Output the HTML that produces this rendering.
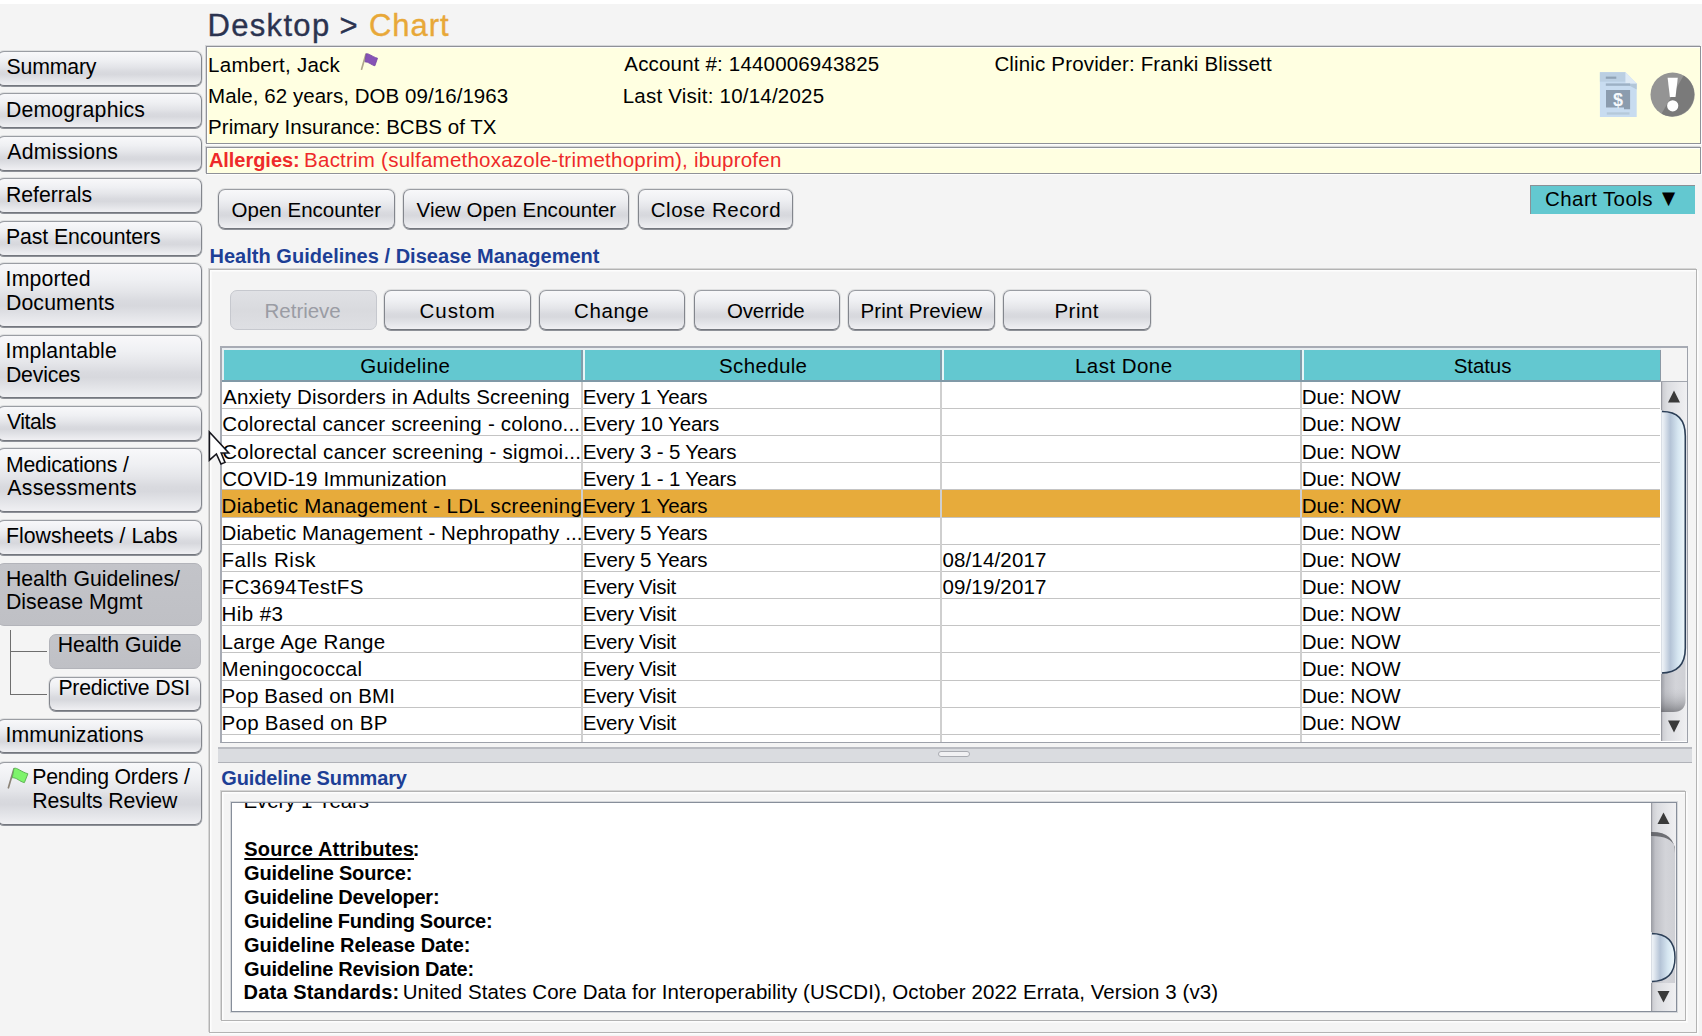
<!DOCTYPE html>
<html lang="en">
<head>
<meta charset="utf-8">
<title>Desktop &gt; Chart</title>
<style>
html,body{margin:0;padding:0;}
body{width:1702px;height:1036px;overflow:hidden;background:#f4f4f4;position:relative;
  font-family:"Liberation Sans",sans-serif;font-size:20px;color:#000;}
.t{position:absolute;white-space:pre;line-height:24px;height:24px;}
.abs{position:absolute;}
#topstrip{position:absolute;left:0;top:0;width:1702px;height:4px;background:#fff;}
.nb{position:absolute;box-sizing:border-box;border:1px solid #83868d;border-top-color:#9a9da3;border-bottom-color:#74777e;border-radius:7px;
  background:linear-gradient(#f8f8fa 0%,#eff0f3 25%,#e4e5e9 45%,#d9dadf 60%,#d7d8dd 68%,#e3e4e8 84%,#f0f0f3 100%);
  box-shadow:0 1px 0 #8d9097,0 0 0 1px rgba(120,124,132,0.16);}
.nb.sel{background:linear-gradient(#c3c4c9,#bfc0c5);border-color:#b3b4ba;box-shadow:none;}
.nb.dis{border-color:#c6c8ce;background:linear-gradient(#e0e1e5,#d9dade 50%,#dedfe3);box-shadow:none;}
.ybox{position:absolute;box-sizing:border-box;background:#ffffe1;border:1px solid #8f9198;box-shadow:1px 1px 0 #fdfdfd,inset 1px 1px 0 rgba(255,255,255,0.85),-1px -1px 0 rgba(143,145,152,0.3);}
.ln{position:absolute;background:#c4c4c4;}
</style>
</head>
<body>
<div id="topstrip"></div>
<div class="nb " style="left:-3px;top:51px;width:205px;height:35px"></div>
<span class="t" style="left:6.60px;top:55px;letter-spacing:-0.183px;font-size:21.25px;">Summary</span>
<div class="nb " style="left:-3px;top:93px;width:205px;height:35px"></div>
<span class="t" style="left:5.90px;top:98px;letter-spacing:0.191px;font-size:21.25px;">Demographics</span>
<div class="nb " style="left:-3px;top:136px;width:205px;height:35px"></div>
<span class="t" style="left:7.30px;top:140px;letter-spacing:0.222px;font-size:21.25px;">Admissions</span>
<div class="nb " style="left:-3px;top:178px;width:205px;height:35px"></div>
<span class="t" style="left:5.90px;top:183px;letter-spacing:0.000px;font-size:21.25px;">Referrals</span>
<div class="nb " style="left:-3px;top:221px;width:205px;height:35px"></div>
<span class="t" style="left:5.90px;top:225px;letter-spacing:-0.086px;font-size:21.25px;">Past Encounters</span>
<div class="nb " style="left:-3px;top:263px;width:205px;height:64px"></div>
<span class="t" style="left:5.60px;top:267px;letter-spacing:0.143px;font-size:21.25px;">Imported</span>
<span class="t" style="left:5.90px;top:291px;letter-spacing:0.150px;font-size:21.25px;">Documents</span>
<div class="nb " style="left:-3px;top:335px;width:205px;height:63px"></div>
<span class="t" style="left:5.60px;top:339px;letter-spacing:0.130px;font-size:21.25px;">Implantable</span>
<span class="t" style="left:5.90px;top:363px;letter-spacing:-0.167px;font-size:21.25px;">Devices</span>
<div class="nb " style="left:-3px;top:406px;width:205px;height:35px"></div>
<span class="t" style="left:6.90px;top:410px;letter-spacing:-0.420px;font-size:21.25px;">Vitals</span>
<div class="nb " style="left:-3px;top:448px;width:205px;height:64px"></div>
<span class="t" style="left:5.90px;top:453px;letter-spacing:-0.192px;font-size:21.25px;">Medications /</span>
<span class="t" style="left:7.30px;top:476px;letter-spacing:0.290px;font-size:21.25px;">Assessments</span>
<div class="nb " style="left:-3px;top:520px;width:205px;height:35px"></div>
<span class="t" style="left:5.90px;top:524px;letter-spacing:0.031px;font-size:21.25px;">Flowsheets / Labs</span>
<div class="nb sel" style="left:-3px;top:563px;width:205px;height:63px"></div>
<span class="t" style="left:5.90px;top:567px;letter-spacing:0.024px;font-size:21.25px;">Health Guidelines/</span>
<span class="t" style="left:5.90px;top:590px;letter-spacing:0.064px;font-size:21.25px;">Disease Mgmt</span>
<div class="nb " style="left:-3px;top:719px;width:205px;height:34px"></div>
<span class="t" style="left:5.60px;top:723px;letter-spacing:0.083px;font-size:21.25px;">Immunizations</span>
<div class="nb " style="left:-3px;top:762px;width:205px;height:63px"></div>
<span class="t" style="left:32.30px;top:765px;letter-spacing:-0.207px;font-size:21.25px;">Pending Orders /</span>
<span class="t" style="left:32.30px;top:789px;letter-spacing:-0.100px;font-size:21.25px;">Results Review</span>
<div class="nb sel" style="left:49px;top:634px;width:152px;height:35px"></div>
<span class="t" style="left:57.80px;top:633px;letter-spacing:-0.018px;font-size:21.25px;">Health Guide</span>
<div class="nb" style="left:49px;top:677px;width:152px;height:34px"></div>
<span class="t" style="left:58.40px;top:676px;letter-spacing:-0.223px;font-size:21.25px;">Predictive DSI</span>
<div class="abs" style="left:10px;top:630px;width:1px;height:65px;background:#6e6e6e"></div>
<div class="abs" style="left:10px;top:651px;width:37px;height:1px;background:#6e6e6e"></div>
<div class="abs" style="left:10px;top:694px;width:37px;height:1px;background:#6e6e6e"></div>
<svg class="abs" style="left:6px;top:766px" width="26" height="26" viewBox="0 0 26 26">
<path d="M2.4 21.8 L8 2.8" stroke="#8c8478" stroke-width="1.7" fill="none" stroke-linecap="round"/>
<path d="M8 2.4 C11 1.2 14.5 5.6 21.9 7.8 L18.4 16.6 C13.5 15.6 10.5 11.2 6.3 11.8 Z" fill="#7ef46b" stroke="#5fb455" stroke-width="1"/>
</svg>
<span class="t" style="left:207.60px;top:14px;letter-spacing:1.300px;font-size:31px;color:#2b3350;-webkit-text-stroke:0.35px #2b3350;">Desktop</span>
<span class="t" style="left:339.50px;top:14px;letter-spacing:1.200px;font-size:31px;color:#2b3350;-webkit-text-stroke:0.35px #2b3350;">&gt;</span>
<span class="t" style="left:368.90px;top:14px;letter-spacing:1.000px;font-size:31px;color:#e8a838;-webkit-text-stroke:0.35px #e8a838;">Chart</span>
<div class="ybox" style="left:206px;top:46px;width:1495px;height:98px"></div>
<span class="t" style="left:208.10px;top:53px;letter-spacing:0.250px;font-size:20.5px;">Lambert, Jack</span>
<span class="t" style="left:208.10px;top:84px;letter-spacing:0.052px;font-size:20.5px;">Male, 62 years, DOB 09/16/1963</span>
<span class="t" style="left:208.10px;top:115px;letter-spacing:0.018px;font-size:20.5px;">Primary Insurance: BCBS of TX</span>
<span class="t" style="left:624.30px;top:52px;letter-spacing:0.178px;font-size:20.5px;">Account #: 1440006943825</span>
<span class="t" style="left:622.70px;top:84px;letter-spacing:0.219px;font-size:20.5px;">Last Visit: 10/14/2025</span>
<span class="t" style="left:994.40px;top:52px;letter-spacing:0.161px;font-size:20.5px;">Clinic Provider: Franki Blissett</span>
<svg class="abs" style="left:358px;top:51px" width="24" height="24" viewBox="0 0 24 24">
<path d="M3.6 18.2 L7.9 3.2" stroke="#b0a88c" stroke-width="1.7" fill="none" stroke-linecap="round"/>
<path d="M8.2 2.8 C10.5 2 14 5.6 19.5 7.2 L16.9 14.8 C13.5 14.2 10.8 10.8 7 10.8 Z" fill="#8653b6" stroke="#7242a2" stroke-width="0.8"/>
</svg>
<svg class="abs" style="left:1599px;top:71px" width="40" height="48" viewBox="0 0 40 48">
<path d="M0.9 1.2 H26.5 L37.7 12.5 V45.9 H0.9 Z" fill="#c8dcf0"/>
<path d="M0.9 1.2 H26.5 V10.7 H0.9 Z" fill="#bbcfe2"/>
<path d="M26.5 12.5 H37.7 V18.5 Z" fill="#b2c6d8"/>
<path d="M26.5 1.2 L37.7 12.5 H26.5 Z" fill="#deeaf5"/>
<rect x="6.8" y="5.6" width="10.5" height="2.2" fill="#8fa2b5"/>
<rect x="6.8" y="12.4" width="24.3" height="2.4" fill="#9db1c5"/>
<path d="M7 19 H31.1 V38.2 H25 V36.4 H7 Z" fill="#8b9cae"/>
<rect x="7.8" y="41.3" width="22.7" height="2.3" fill="#b5c9da"/>
<text x="19" y="34.8" font-family="Liberation Sans, sans-serif" font-weight="700" font-size="18" text-anchor="middle" fill="#f4f8fc">$</text>
</svg>
<svg class="abs" style="left:1650px;top:72px" width="46" height="46" viewBox="0 0 46 46">
<circle cx="22.6" cy="22.6" r="22.1" fill="#949494"/>
<path d="M33.7 3.5 A22.1 22.1 0 0 1 11.5 41.7 Z" fill="#7a7a7a"/>
<path d="M17.6 5.8 H27.8 L25.5 25 H19.9 Z" fill="#fff"/>
<circle cx="22.7" cy="33.8" r="5.6" fill="#fff"/>
</svg>
<div class="ybox" style="left:206px;top:147px;width:1495px;height:27px"></div>
<span class="t" style="left:208.90px;top:148px;letter-spacing:-0.033px;font-weight:700;color:#ee2a2a;">Allergies:</span>
<span class="t" style="left:304.10px;top:148px;letter-spacing:0.229px;font-size:20.5px;color:#ee2a2a;">Bactrim (sulfamethoxazole-trimethoprim), ibuprofen</span>
<div class="nb" style="left:218px;top:189px;width:177px;height:40px"></div>
<span class="t" style="left:231.50px;top:198px;letter-spacing:0.023px;font-size:20.5px;">Open Encounter</span>
<div class="nb" style="left:403px;top:189px;width:226px;height:40px"></div>
<span class="t" style="left:416.60px;top:198px;letter-spacing:0.028px;font-size:20.5px;">View Open Encounter</span>
<div class="nb" style="left:638px;top:189px;width:155px;height:40px"></div>
<span class="t" style="left:650.80px;top:198px;letter-spacing:0.509px;font-size:20.5px;">Close Record</span>
<div class="abs" style="left:1530px;top:185px;width:165px;height:29px;box-sizing:border-box;background:#63c8d0;border-left:1px solid #8a9096;border-top:1px solid #8a9096"></div>
<span class="t" style="left:1545.10px;top:187px;letter-spacing:0.400px;font-size:20.5px;">Chart Tools</span>
<span class="t" style="left:1662px;top:186px;font-size:18px;font-family:'DejaVu Sans',sans-serif;transform:scaleX(0.95);transform-origin:left">&#9660;</span>
<span class="t" style="left:209.50px;top:244px;letter-spacing:0.027px;font-weight:700;color:#1d3f96;">Health Guidelines / Disease Management</span>
<div class="abs" style="left:209px;top:269px;width:1488px;height:764px;box-sizing:border-box;border:1px solid #b3b3b3;box-shadow:inset 1px 1px 0 #fdfdfd,inset 2px 2px 0 rgba(255,255,255,0.45),1px 1px 0 #fdfdfd,2px 2px 0 rgba(255,255,255,0.45),0 0 0 1px rgba(170,170,170,0.0),-1px -1px 0 rgba(176,176,176,0.45)"></div>
<div class="nb dis" style="left:230px;top:290px;width:147px;height:40px"></div>
<span class="t" style="left:264.60px;top:299px;letter-spacing:-0.029px;font-size:20.5px;color:#9a9ca4;">Retrieve</span>
<div class="nb" style="left:384px;top:290px;width:147px;height:40px"></div>
<span class="t" style="left:419.50px;top:299px;letter-spacing:0.960px;font-size:20.5px;">Custom</span>
<div class="nb" style="left:539px;top:290px;width:146px;height:40px"></div>
<span class="t" style="left:574.10px;top:299px;letter-spacing:0.560px;font-size:20.5px;">Change</span>
<div class="nb" style="left:694px;top:290px;width:146px;height:40px"></div>
<span class="t" style="left:726.90px;top:299px;letter-spacing:-0.114px;font-size:20.5px;">Override</span>
<div class="nb" style="left:848px;top:290px;width:147px;height:40px"></div>
<span class="t" style="left:860.60px;top:299px;letter-spacing:0.050px;font-size:20.5px;">Print Preview</span>
<div class="nb" style="left:1003px;top:290px;width:148px;height:40px"></div>
<span class="t" style="left:1054.50px;top:299px;letter-spacing:0.450px;font-size:20.5px;">Print</span>
<div class="abs" style="left:220px;top:346px;width:1468px;height:397px;box-sizing:border-box;border:2px solid #a7abb4;border-right-width:1px;border-bottom-width:1px;border-right-color:#9da1aa;border-bottom-color:#9da1aa;background:#fff"></div>
<div class="abs" style="left:222px;top:348px;width:1465px;height:2px;background:#e9eef1"></div>
<div class="abs" style="left:222px;top:350px;width:2px;height:30px;background:#e4eef1"></div>
<div class="abs" style="left:224px;top:350px;width:1436px;height:30px;background:#63c8d0"></div>
<div class="abs" style="left:1661px;top:348px;width:26px;height:34px;background:#f4f4f4"></div>
<div class="abs" style="left:1660px;top:350px;width:1px;height:32px;background:#8a98a4"></div>
<div class="abs" style="left:222px;top:380px;width:1438px;height:2px;background:#8099a7"></div>
<div class="abs" style="left:1660px;top:381px;width:27px;height:1px;background:#a2a6ae"></div>
<div class="abs" style="left:581px;top:350px;width:2px;height:30px;background:#7f9dab"></div>
<div class="abs" style="left:583px;top:350px;width:2px;height:30px;background:#e6f5f7"></div>
<div class="abs" style="left:940px;top:350px;width:2px;height:30px;background:#7f9dab"></div>
<div class="abs" style="left:942px;top:350px;width:2px;height:30px;background:#e6f5f7"></div>
<div class="abs" style="left:1300px;top:350px;width:2px;height:30px;background:#7f9dab"></div>
<div class="abs" style="left:1302px;top:350px;width:2px;height:30px;background:#e6f5f7"></div>
<span class="t" style="left:360.30px;top:354px;letter-spacing:0.363px;font-size:20.5px;">Guideline</span>
<span class="t" style="left:719.00px;top:354px;letter-spacing:0.357px;font-size:20.5px;">Schedule</span>
<span class="t" style="left:1075.00px;top:354px;letter-spacing:0.450px;font-size:20.5px;">Last Done</span>
<span class="t" style="left:1453.70px;top:354px;letter-spacing:-0.080px;font-size:20.5px;">Status</span>
<div class="abs" style="left:222px;top:490px;width:1438px;height:27px;background:#e7ab3b"></div>
<div class="ln" style="left:222px;top:408px;width:1438px;height:1px"></div>
<div class="ln" style="left:222px;top:435px;width:1438px;height:1px"></div>
<div class="ln" style="left:222px;top:462px;width:1438px;height:1px"></div>
<div class="ln" style="left:222px;top:489px;width:1438px;height:1px"></div>
<div class="ln" style="left:222px;top:517px;width:1438px;height:1px"></div>
<div class="ln" style="left:222px;top:544px;width:1438px;height:1px"></div>
<div class="ln" style="left:222px;top:571px;width:1438px;height:1px"></div>
<div class="ln" style="left:222px;top:598px;width:1438px;height:1px"></div>
<div class="ln" style="left:222px;top:625px;width:1438px;height:1px"></div>
<div class="ln" style="left:222px;top:652px;width:1438px;height:1px"></div>
<div class="ln" style="left:222px;top:680px;width:1438px;height:1px"></div>
<div class="ln" style="left:222px;top:707px;width:1438px;height:1px"></div>
<div class="ln" style="left:222px;top:734px;width:1438px;height:1px"></div>
<div class="abs" style="left:581px;top:382px;width:2px;height:360px;background:#cfcfcf"></div>
<div class="abs" style="left:940px;top:382px;width:2px;height:360px;background:#cfcfcf"></div>
<div class="abs" style="left:1300px;top:382px;width:2px;height:360px;background:#cfcfcf"></div>
<span class="t" style="left:223.10px;top:385px;letter-spacing:0.131px;font-size:20.5px;">Anxiety Disorders in Adults Screening</span>
<span class="t" style="left:582.80px;top:385px;letter-spacing:-0.142px;font-size:20.5px;">Every 1 Years</span>
<span class="t" style="left:1301.70px;top:385px;letter-spacing:-0.043px;font-size:20.5px;">Due: NOW</span>
<span class="t" style="left:222.20px;top:412px;letter-spacing:0.211px;font-size:20.5px;">Colorectal cancer screening - colono...</span>
<span class="t" style="left:582.80px;top:412px;letter-spacing:-0.115px;font-size:20.5px;">Every 10 Years</span>
<span class="t" style="left:1301.70px;top:412px;letter-spacing:-0.043px;font-size:20.5px;">Due: NOW</span>
<span class="t" style="left:222.20px;top:440px;letter-spacing:0.268px;font-size:20.5px;">Colorectal cancer screening - sigmoi...</span>
<span class="t" style="left:582.80px;top:440px;letter-spacing:-0.156px;font-size:20.5px;">Every 3 - 5 Years</span>
<span class="t" style="left:1301.70px;top:440px;letter-spacing:-0.043px;font-size:20.5px;">Due: NOW</span>
<span class="t" style="left:222.20px;top:467px;letter-spacing:0.110px;font-size:20.5px;">COVID-19 Immunization</span>
<span class="t" style="left:582.80px;top:467px;letter-spacing:-0.156px;font-size:20.5px;">Every 1 - 1 Years</span>
<span class="t" style="left:1301.70px;top:467px;letter-spacing:-0.043px;font-size:20.5px;">Due: NOW</span>
<span class="t" style="left:221.50px;top:494px;letter-spacing:0.332px;font-size:20.5px;">Diabetic Management - LDL screening</span>
<span class="t" style="left:582.80px;top:494px;letter-spacing:-0.142px;font-size:20.5px;">Every 1 Years</span>
<span class="t" style="left:1301.70px;top:494px;letter-spacing:-0.043px;font-size:20.5px;">Due: NOW</span>
<span class="t" style="left:221.50px;top:521px;letter-spacing:0.089px;font-size:20.5px;">Diabetic Management - Nephropathy ...</span>
<span class="t" style="left:582.80px;top:521px;letter-spacing:-0.142px;font-size:20.5px;">Every 5 Years</span>
<span class="t" style="left:1301.70px;top:521px;letter-spacing:-0.043px;font-size:20.5px;">Due: NOW</span>
<span class="t" style="left:221.50px;top:548px;letter-spacing:0.578px;font-size:20.5px;">Falls Risk</span>
<span class="t" style="left:582.80px;top:548px;letter-spacing:-0.142px;font-size:20.5px;">Every 5 Years</span>
<span class="t" style="left:942.40px;top:548px;letter-spacing:0.156px;font-size:20.5px;">08/14/2017</span>
<span class="t" style="left:1301.70px;top:548px;letter-spacing:-0.043px;font-size:20.5px;">Due: NOW</span>
<span class="t" style="left:221.50px;top:575px;letter-spacing:0.464px;font-size:20.5px;">FC3694TestFS</span>
<span class="t" style="left:582.80px;top:575px;letter-spacing:-0.300px;font-size:20.5px;">Every Visit</span>
<span class="t" style="left:942.40px;top:575px;letter-spacing:0.156px;font-size:20.5px;">09/19/2017</span>
<span class="t" style="left:1301.70px;top:575px;letter-spacing:-0.043px;font-size:20.5px;">Due: NOW</span>
<span class="t" style="left:221.50px;top:602px;letter-spacing:0.440px;font-size:20.5px;">Hib #3</span>
<span class="t" style="left:582.80px;top:602px;letter-spacing:-0.300px;font-size:20.5px;">Every Visit</span>
<span class="t" style="left:1301.70px;top:602px;letter-spacing:-0.043px;font-size:20.5px;">Due: NOW</span>
<span class="t" style="left:221.50px;top:630px;letter-spacing:0.293px;font-size:20.5px;">Large Age Range</span>
<span class="t" style="left:582.80px;top:630px;letter-spacing:-0.300px;font-size:20.5px;">Every Visit</span>
<span class="t" style="left:1301.70px;top:630px;letter-spacing:-0.043px;font-size:20.5px;">Due: NOW</span>
<span class="t" style="left:221.50px;top:657px;letter-spacing:0.317px;font-size:20.5px;">Meningococcal</span>
<span class="t" style="left:582.80px;top:657px;letter-spacing:-0.300px;font-size:20.5px;">Every Visit</span>
<span class="t" style="left:1301.70px;top:657px;letter-spacing:-0.043px;font-size:20.5px;">Due: NOW</span>
<span class="t" style="left:221.50px;top:684px;letter-spacing:0.173px;font-size:20.5px;">Pop Based on BMI</span>
<span class="t" style="left:582.80px;top:684px;letter-spacing:-0.300px;font-size:20.5px;">Every Visit</span>
<span class="t" style="left:1301.70px;top:684px;letter-spacing:-0.043px;font-size:20.5px;">Due: NOW</span>
<span class="t" style="left:221.50px;top:711px;letter-spacing:0.286px;font-size:20.5px;">Pop Based on BP</span>
<span class="t" style="left:582.80px;top:711px;letter-spacing:-0.300px;font-size:20.5px;">Every Visit</span>
<span class="t" style="left:1301.70px;top:711px;letter-spacing:-0.043px;font-size:20.5px;">Due: NOW</span>
<svg class="abs" style="left:1661px;top:382px" width="26" height="359" viewBox="0 0 26 359">
<defs>
<linearGradient id="trk" x1="0" x2="1" y1="0" y2="0"><stop offset="0" stop-color="#9a9ca3"/><stop offset="0.18" stop-color="#bfc0c6"/><stop offset="0.6" stop-color="#d3d4d9"/><stop offset="1" stop-color="#cfd0d5"/></linearGradient>
<linearGradient id="thm" x1="0" x2="1" y1="0" y2="0"><stop offset="0" stop-color="#f4f7fa"/><stop offset="0.12" stop-color="#e4eaf1"/><stop offset="0.38" stop-color="#b4c3d6"/><stop offset="0.7" stop-color="#d6e6f1"/><stop offset="1" stop-color="#eef8fc"/></linearGradient>
<linearGradient id="arb" x1="0" x2="1" y1="0" y2="0"><stop offset="0" stop-color="#c9cacf"/><stop offset="0.25" stop-color="#dcdde1"/><stop offset="1" stop-color="#f0f0f2"/></linearGradient>
<linearGradient id="shd" x1="0" x2="0" y1="0" y2="1"><stop offset="0" stop-color="#c5c6cb" stop-opacity="0"/><stop offset="1" stop-color="#4a4b50"/></linearGradient>
</defs>
<rect x="0" y="0" width="26" height="359" fill="url(#arb)"/>
<rect x="0" y="0" width="1.2" height="359" fill="#9a9ca3"/>
<path d="M0 29 H1 Q24.5 29 24.5 52 V318 Q24.5 330 12 330 H0 Z" fill="url(#trk)"/>
<path d="M0 305 H24.5 V318 Q24.5 330 12 330 H0 Z" fill="url(#shd)" opacity="0.55"/>
<path d="M0 29.5 H1 Q24.3 29.5 24.3 54 V266 Q24.3 291 0 291 Z" fill="url(#thm)" stroke="#2c3f57" stroke-width="1.6"/>
<rect x="0" y="28" width="1" height="264" fill="#d9dee5"/>
<path d="M13 8.5 L19 20.5 H7 Z" fill="#3a3a3a"/>
<path d="M13 350.5 L19 338.5 H7 Z" fill="#3a3a3a"/>
</svg>
<div class="abs" style="left:218px;top:747px;width:1474px;height:16px;box-sizing:border-box;border-top:2px solid #b9bbc1;border-bottom:1px solid #b0b2b8;background:#dadce0"></div>
<div class="abs" style="left:938px;top:751px;width:32px;height:6px;box-sizing:border-box;border:1px solid #a9abb1;border-radius:3px;background:#f1f1f3"></div>
<span class="t" style="left:221.30px;top:766px;letter-spacing:-0.137px;font-weight:700;color:#1d3f96;">Guideline Summary</span>
<div class="abs" style="left:221px;top:791px;width:1465px;height:230px;box-sizing:border-box;border:1px solid #b3b3b3;box-shadow:inset 1px 1px 0 #fdfdfd,inset 2px 2px 0 rgba(255,255,255,0.45),1px 1px 0 #fdfdfd,2px 2px 0 rgba(255,255,255,0.45),0 0 0 1px rgba(170,170,170,0.0),-1px -1px 0 rgba(176,176,176,0.45)"></div>
<div class="abs" style="left:231px;top:802px;width:1446px;height:210px;box-sizing:border-box;border:1px solid #878e9a;box-shadow:0 0 0 1px rgba(135,142,154,0.28);background:#fff;overflow:hidden">
<span class="t" style="left:11.40px;top:-14px;letter-spacing:-0.067px;font-size:20.5px;">Every 1 Years</span>
</div>
<span class="t" style="left:244.30px;top:837px;letter-spacing:0.156px;font-weight:700;text-decoration:underline;text-decoration-thickness:2px;text-underline-offset:2px;">Source Attributes</span>
<span class="t" style="left:412.80px;top:837px;letter-spacing:0.000px;font-weight:700;">:</span>
<span class="t" style="left:244.10px;top:861px;letter-spacing:-0.181px;font-weight:700;">Guideline Source:</span>
<span class="t" style="left:244.10px;top:885px;letter-spacing:-0.242px;font-weight:700;">Guideline Developer:</span>
<span class="t" style="left:244.10px;top:909px;letter-spacing:-0.296px;font-weight:700;">Guideline Funding Source:</span>
<span class="t" style="left:244.10px;top:933px;letter-spacing:-0.073px;font-weight:700;">Guideline Release Date:</span>
<span class="t" style="left:244.10px;top:957px;letter-spacing:-0.243px;font-weight:700;">Guideline Revision Date:</span>
<span class="t" style="left:243.60px;top:980px;letter-spacing:0.157px;font-weight:700;">Data Standards:</span>
<span class="t" style="left:402.70px;top:980px;letter-spacing:0.059px;font-size:20.5px;">United States Core Data for Interoperability (USCDI), October 2022 Errata, Version 3 (v3)</span>
<svg class="abs" style="left:1651px;top:803px" width="25" height="208" viewBox="0 0 25 208">
<rect x="0" y="0" width="25" height="208" fill="url(#arb)"/>
<rect x="0" y="0" width="1.2" height="208" fill="#9a9ca3"/>
<path d="M0 29 H1 Q24 29 24 50 V180 H0 Z" fill="url(#trk)"/>
<path d="M0 29 H1 Q24 29 24 50 V44 Q20 33 1 33 H0 Z" fill="#55565b" opacity="0.8"/>
<path d="M0 130.5 Q24 130.5 24 154.5 Q24 178.5 0 178.5 Z" fill="url(#thm)" stroke="#2c3f57" stroke-width="1.5"/>
<rect x="0" y="129" width="1" height="51" fill="#d9dee5"/>
<path d="M12.5 9.5 L18.5 21 H6.5 Z" fill="#3a3a3a"/>
<path d="M12.5 199.5 L18.5 188 H6.5 Z" fill="#3a3a3a"/>
</svg>
<svg class="abs" style="left:207px;top:429px" width="26" height="38" viewBox="0 0 26 38">
<path d="M2.4 3 V31.2 L9.4 25 L14 35 L18 33.4 L14.2 24 H21.8 Z" fill="#fff" stroke="#15151c" stroke-width="1.6" stroke-linejoin="miter"/>
</svg>
</body>
</html>
